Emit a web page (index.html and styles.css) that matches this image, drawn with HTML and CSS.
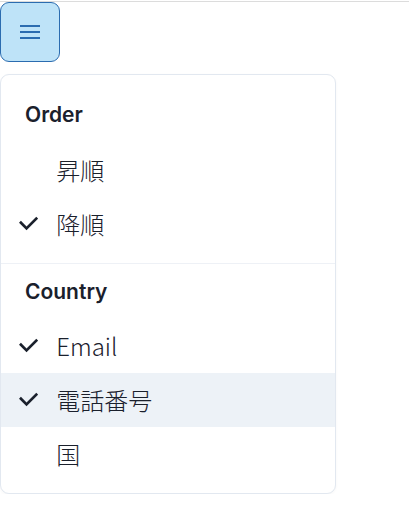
FILE: index.html
```
<!DOCTYPE html>
<html lang="ja">
<head>
<meta charset="utf-8">
<link rel="stylesheet" href="styles.css">
</head>
<body>
<div class="topline"></div>
<div class="page">
  <button class="menu-btn" aria-label="Options">
    <svg viewBox="0 0 24 24" width="24" height="24"><path fill="currentColor" d="M2 5h20v2H2zm0 6h20v2H2zm0 6h20v2H2z"/></svg>
  </button>
  <div class="menu">
    <div class="group">
      <p class="group-title">Order</p>
      <div class="item"><span class="check"></span><span class="label">昇順</span></div>
      <div class="item"><span class="check"><svg viewBox="0 0 14 14" width="1em" height="1em"><polygon fill="currentColor" points="5.5 11.9 0 6.4 1.4 5 5.5 9.1 12.6 2 14 3.4"/></svg></span><span class="label">降順</span></div>
    </div>
    <hr class="divider">
    <div class="group">
      <p class="group-title">Country</p>
      <div class="item"><span class="check"><svg viewBox="0 0 14 14" width="1em" height="1em"><polygon fill="currentColor" points="5.5 11.9 0 6.4 1.4 5 5.5 9.1 12.6 2 14 3.4"/></svg></span><span class="label">Email</span></div>
      <div class="item active"><span class="check"><svg viewBox="0 0 14 14" width="1em" height="1em"><polygon fill="currentColor" points="5.5 11.9 0 6.4 1.4 5 5.5 9.1 12.6 2 14 3.4"/></svg></span><span class="label">電話番号</span></div>
      <div class="item"><span class="check"></span><span class="label">国</span></div>
    </div>
  </div>
</div>
</body>
</html>
```
FILE: styles.css
```
* { box-sizing: border-box; }
html, body { margin: 0; padding: 0; background: #fff; }
body {
  font-family: Inter, "Noto Sans CJK JP", sans-serif;
  color: #1a202c;
  font-size: 24px;
  line-height: 1.5;
}
.topline { height: 1px; margin-top: 1px; background: #dcdcdc; }
.page { display: flex; flex-direction: column; align-items: flex-start; }
.menu-btn {
  width: 60px; height: 60px;
  display: flex; align-items: center; justify-content: center;
  background: #bee3f8;
  border: 1px solid #2b6cb0;
  border-radius: 9px;
  color: #2b6cb0;
  padding: 0;
}
.menu-btn svg { width: 24px; height: 24px; display: block; }
.menu {
  margin-top: 12px;
  width: 336px;
  padding: 12px 0;
  border: 1px solid #e2e8f0;
  border-radius: 9px;
  background: #fff;
  box-shadow: 0 1px 3px rgba(0,0,0,0.04);
}
.group-title {
  margin: 12px 24px;
  font-size: 21px;
  font-weight: 600;
  line-height: 1.5;
}
.item {
  display: flex;
  align-items: center;
  height: 54px;
  padding: 9px 18px;
}
.item.active { background: #edf2f7; }
.check {
  width: 19.2px;
  font-size: 19.2px;
  margin-right: 18px;
  display: flex; align-items: center;
  flex-shrink: 0;
}
.check svg { display: block; }
.label {
  flex: 1;
  font-family: "Noto Sans CJK JP", sans-serif;
  font-weight: 300;
}
.divider {
  margin: 12px 0;
  border: 0;
  border-bottom: 1px solid #e2e8f0;
  opacity: 0.6;
}
```
